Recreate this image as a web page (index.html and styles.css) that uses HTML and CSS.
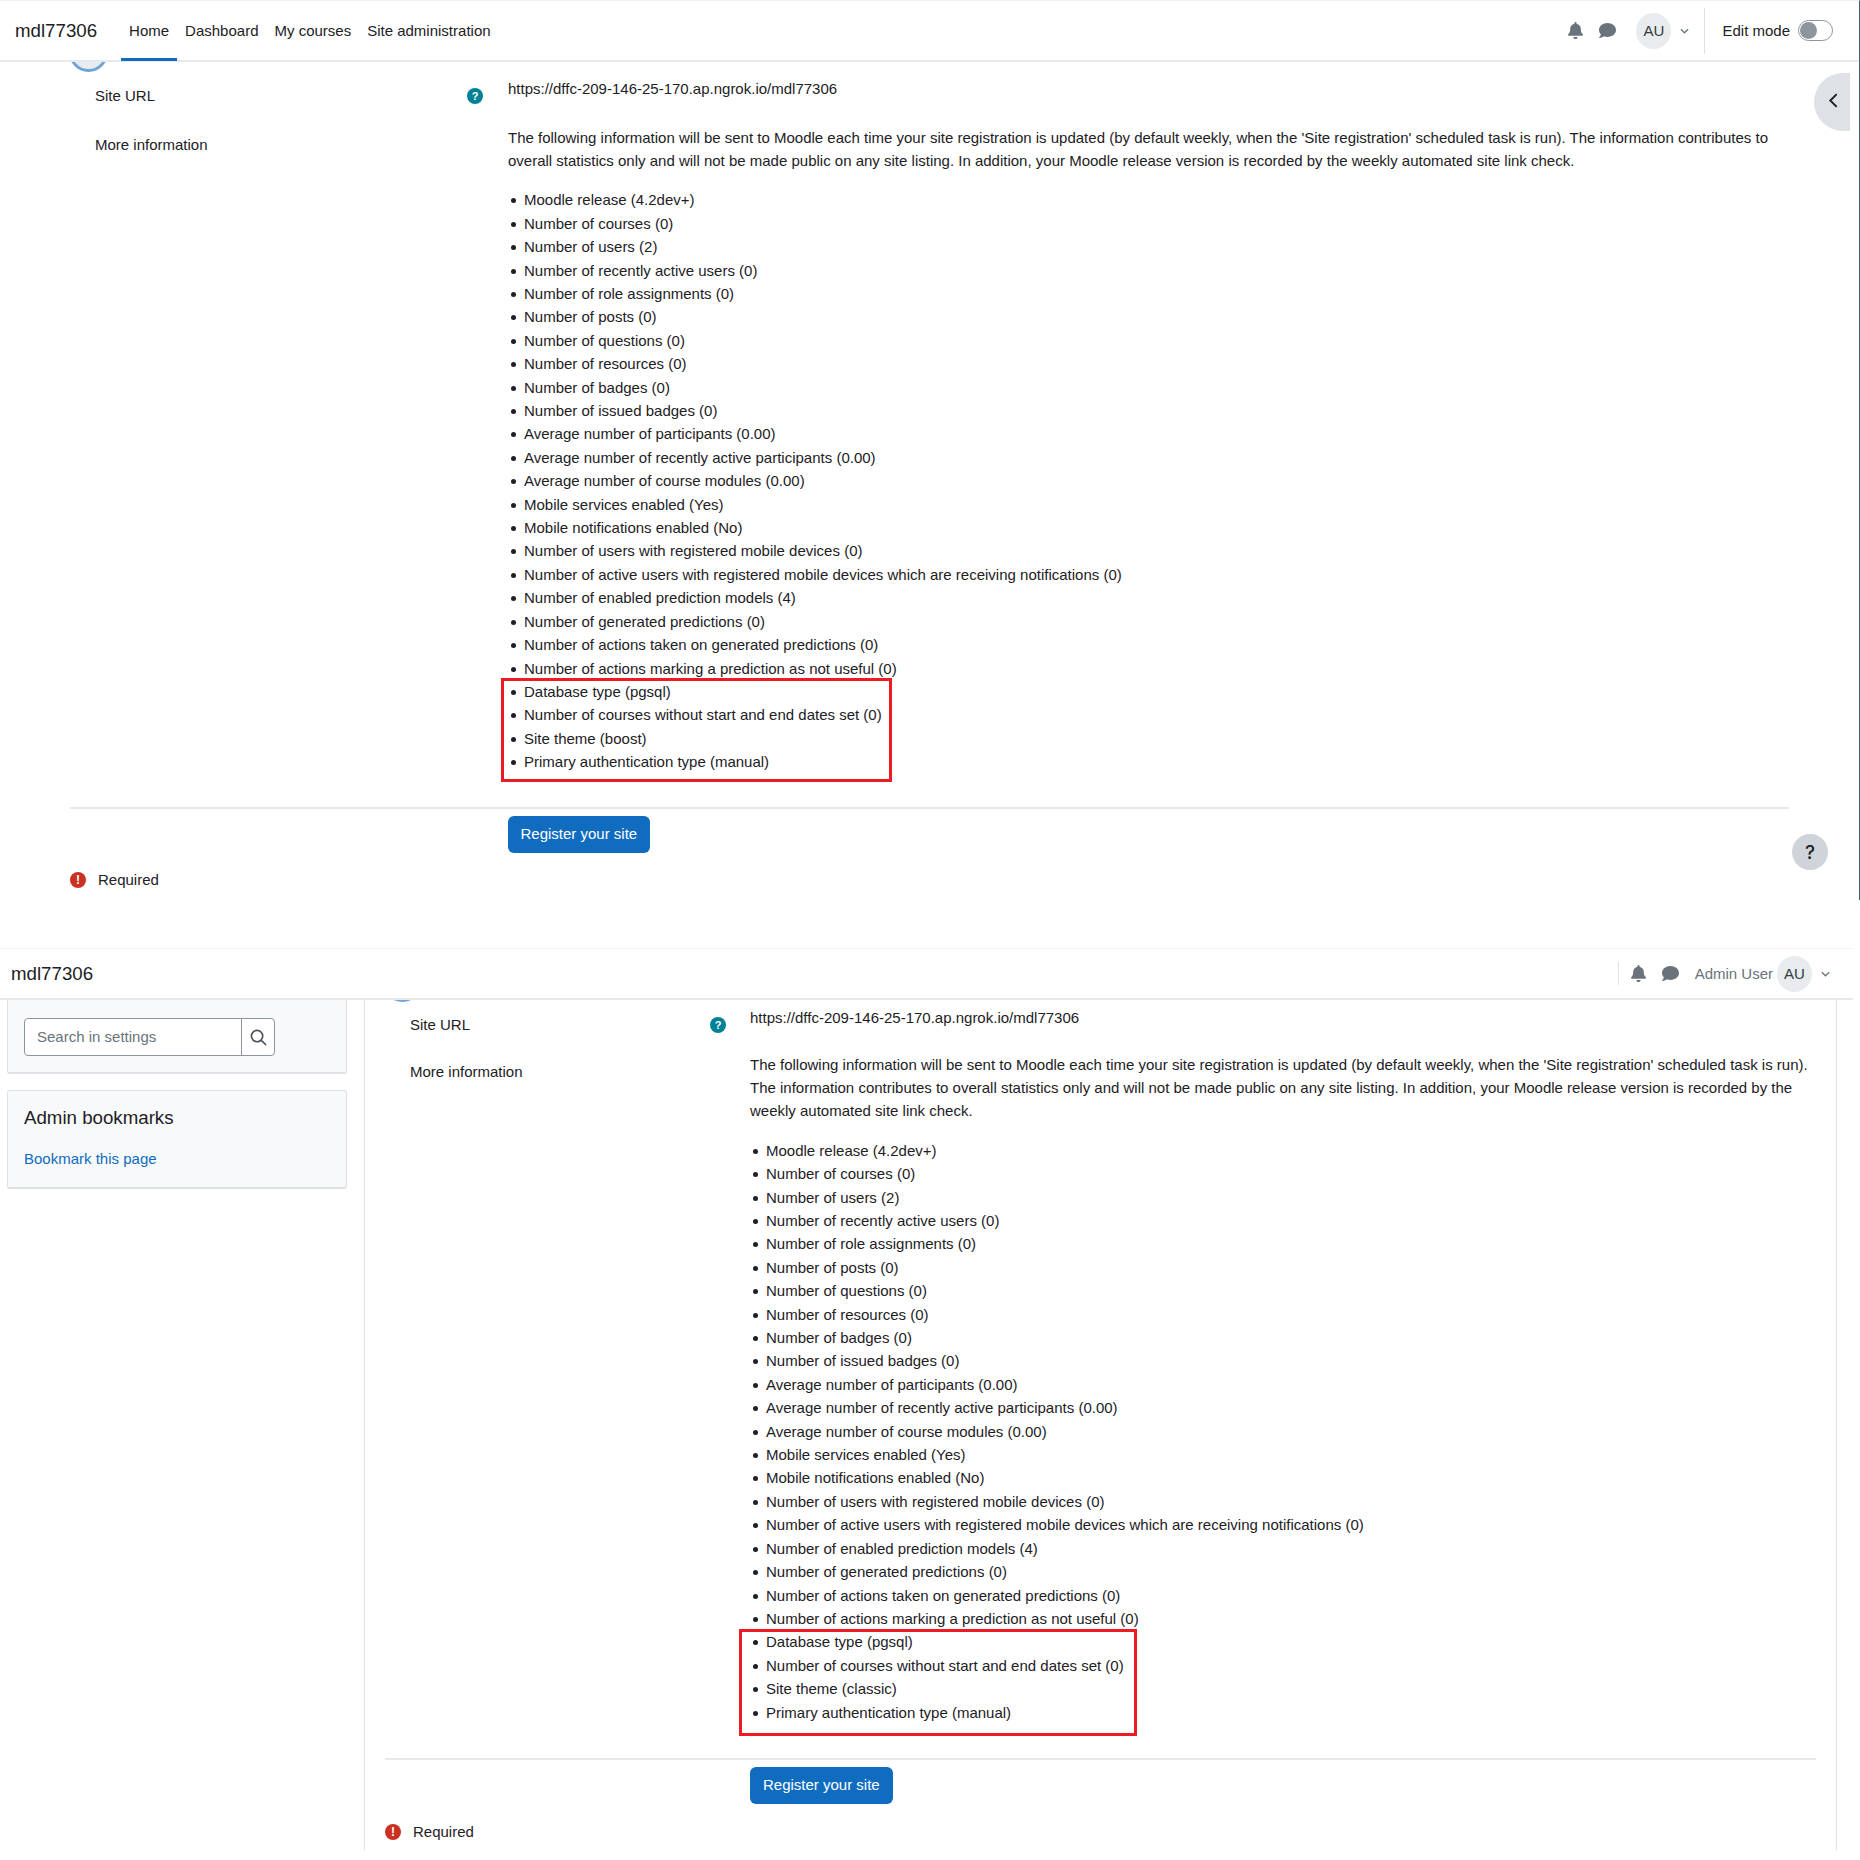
FILE: index.html
```html
<!DOCTYPE html>
<html lang="en">
<head>
  <meta charset="UTF-8" />
  <title>Site registration - mdl77306</title>
  <link rel="stylesheet" href="styles.css">
</head>
<body>

  <!-- boost theme -->
  <section class="shot shot-boost">
    <header class="navbar">
      <span class="brand">mdl77306</span>
      <nav class="primary-nav">
        <a class="active" href="#">Home</a>
        <a href="#">Dashboard</a>
        <a href="#">My courses</a>
        <a href="#">Site administration</a>
      </nav>
      <div class="usermenu">
        <svg class="icon-bell" viewBox="0 0 448 512"><path d="M224 512c35 0 64-29 64-64H160c0 35 29 64 64 64zm215-150c-19-21-55-52-55-154 0-78-54-140-128-155V32a32 32 0 0 0-64 0v21C118 68 64 130 64 208c0 102-36 133-55 154-6 6-9 14-9 22 0 16 13 32 32 32h384c19 0 32-16 32-32 0-8-3-16-9-22z"/></svg>
        <svg class="icon-chat" viewBox="0 0 512 512"><path d="M256 32C115 32 0 125 0 240c0 50 22 95 58 131-13 50-53 93-54 94-3 3-4 7-2 11s5 4 8 4c66 0 116-32 141-51 32 12 67 19 105 19 141 0 256-93 256-208S397 32 256 32z"/></svg>
        <span class="avatar">AU</span>
        <svg class="chevron" viewBox="0 0 10 6"><path d="M1 1l4 4 4-4"/></svg>
        <span class="divider"></span>
        <span class="editmode">Edit mode</span>
        <span class="toggle"><i></i></span>
      </div>
    </header>

    <span class="step-circle"></span>

    <div class="region">
      <form class="regform">
        <div class="fitem fitem-url">
          <div class="flabel">Site URL
            <span class="help">?</span>
          </div>
          <div class="fvalue">https://dffc-209-146-25-170.ap.ngrok.io/mdl77306</div>
        </div>
        <div class="fitem">
          <div class="flabel">More information</div>
          <div class="fvalue">
            <p>The following information will be sent to Moodle each time your site registration is updated (by default weekly, when the 'Site registration' scheduled task is run). The information contributes to overall statistics only and will not be made public on any site listing. In addition, your Moodle release version is recorded by the weekly automated site link check.</p>
            <ul>
              <li>Moodle release (4.2dev+)</li>
              <li>Number of courses (0)</li>
              <li>Number of users (2)</li>
              <li>Number of recently active users (0)</li>
              <li>Number of role assignments (0)</li>
              <li>Number of posts (0)</li>
              <li>Number of questions (0)</li>
              <li>Number of resources (0)</li>
              <li>Number of badges (0)</li>
              <li>Number of issued badges (0)</li>
              <li>Average number of participants (0.00)</li>
              <li>Average number of recently active participants (0.00)</li>
              <li>Average number of course modules (0.00)</li>
              <li>Mobile services enabled (Yes)</li>
              <li>Mobile notifications enabled (No)</li>
              <li>Number of users with registered mobile devices (0)</li>
              <li>Number of active users with registered mobile devices which are receiving notifications (0)</li>
              <li>Number of enabled prediction models (4)</li>
              <li>Number of generated predictions (0)</li>
              <li>Number of actions taken on generated predictions (0)</li>
              <li>Number of actions marking a prediction as not useful (0)</li>
            </ul>
            <ul class="marked">
              <li>Database type (pgsql)</li>
              <li>Number of courses without start and end dates set (0)</li>
              <li>Site theme (boost)</li>
              <li>Primary authentication type (manual)</li>
            </ul>
          </div>
        </div>
        <div class="factions">
          <button class="btn-primary" type="button">Register your site</button>
        </div>
        <div class="required">
          <span class="req-icon">!</span>
          Required
        </div>
      </form>
    </div>

    <button class="drawer-toggle" type="button">
      <svg viewBox="0 0 10 16"><path d="M8 2L2 8l6 6"/></svg>
    </button>
    <button class="help-fab" type="button">?</button>
  </section>

  <!-- classic theme -->
  <section class="shot shot-classic">
    <header class="navbar">
      <span class="brand">mdl77306</span>
      <div class="usermenu">
        <span class="divider"></span>
        <svg class="icon-bell" viewBox="0 0 448 512"><path d="M224 512c35 0 64-29 64-64H160c0 35 29 64 64 64zm215-150c-19-21-55-52-55-154 0-78-54-140-128-155V32a32 32 0 0 0-64 0v21C118 68 64 130 64 208c0 102-36 133-55 154-6 6-9 14-9 22 0 16 13 32 32 32h384c19 0 32-16 32-32 0-8-3-16-9-22z"/></svg>
        <svg class="icon-chat" viewBox="0 0 512 512"><path d="M256 32C115 32 0 125 0 240c0 50 22 95 58 131-13 50-53 93-54 94-3 3-4 7-2 11s5 4 8 4c66 0 116-32 141-51 32 12 67 19 105 19 141 0 256-93 256-208S397 32 256 32z"/></svg>
        <span class="username">Admin User</span>
        <span class="avatar">AU</span>
        <svg class="chevron" viewBox="0 0 10 6"><path d="M1 1l4 4 4-4"/></svg>
      </div>
    </header>

    <span class="step-circle"></span>

    <div class="columns">
      <aside class="sidebar">
        <div class="block block-search">
          <div class="searchbox">
            <span class="search-input">Search in settings</span>
            <span class="search-btn">
              <svg viewBox="0 0 18 18"><circle cx="7.5" cy="7.5" r="6"/><path d="M12 12l5 5"/></svg>
            </span>
          </div>
        </div>
        <div class="block block-bookmarks">
          <h5>Admin bookmarks</h5>
          <a href="#">Bookmark this page</a>
        </div>
      </aside>

      <div class="region">
        <form class="regform">
          <div class="fitem fitem-url">
            <div class="flabel">Site URL
              <span class="help">?</span>
            </div>
            <div class="fvalue">https://dffc-209-146-25-170.ap.ngrok.io/mdl77306</div>
          </div>
          <div class="fitem">
            <div class="flabel">More information</div>
            <div class="fvalue">
              <p>The following information will be sent to Moodle each time your site registration is updated (by default weekly, when the 'Site registration' scheduled task is run). The information contributes to overall statistics only and will not be made public on any site listing. In addition, your Moodle release version is recorded by the weekly automated site link check.</p>
              <ul>
                <li>Moodle release (4.2dev+)</li>
                <li>Number of courses (0)</li>
                <li>Number of users (2)</li>
                <li>Number of recently active users (0)</li>
                <li>Number of role assignments (0)</li>
                <li>Number of posts (0)</li>
                <li>Number of questions (0)</li>
                <li>Number of resources (0)</li>
                <li>Number of badges (0)</li>
                <li>Number of issued badges (0)</li>
                <li>Average number of participants (0.00)</li>
                <li>Average number of recently active participants (0.00)</li>
                <li>Average number of course modules (0.00)</li>
                <li>Mobile services enabled (Yes)</li>
                <li>Mobile notifications enabled (No)</li>
                <li>Number of users with registered mobile devices (0)</li>
                <li>Number of active users with registered mobile devices which are receiving notifications (0)</li>
                <li>Number of enabled prediction models (4)</li>
                <li>Number of generated predictions (0)</li>
                <li>Number of actions taken on generated predictions (0)</li>
                <li>Number of actions marking a prediction as not useful (0)</li>
              </ul>
              <ul class="marked">
                <li>Database type (pgsql)</li>
                <li>Number of courses without start and end dates set (0)</li>
                <li>Site theme (classic)</li>
                <li>Primary authentication type (manual)</li>
              </ul>
            </div>
          </div>
          <div class="factions">
            <button class="btn-primary" type="button">Register your site</button>
          </div>
          <div class="required">
            <span class="req-icon">!</span>
            Required
          </div>
        </form>
      </div>
    </div>
  </section>

</body>
</html>
```

FILE: styles.css
```css
:root {
  --text-color: #1d2125;
  --line-color: #dee2e6;
  --brand-blue: #0f6cbf;
  --red-box: #ed1c24;
  --icon-grey: #6a737b;
}

* {
  box-sizing: border-box;
}

body {
  margin: 0;
  background-color: #fff;
  color: var(--text-color);
  font-family: "Liberation Sans", Arial, sans-serif;
  font-size: 15px;
  line-height: 23.4px;
}

.shot {
  position: relative;
  overflow: hidden;
}

.shot-boost {
  height: 900px;
  border-top: 1px solid #f0f0f0;
  border-right: 1px solid #3f5f7f;
}

.shot-classic {
  height: 902px;
  margin-top: 48px;
  margin-right: 7px;
  border-top: 1px solid #f2f2f2;
}

/* navbar */
.navbar {
  position: relative;
  z-index: 2;
  display: flex;
  align-items: center;
  background-color: #fff;
  border-bottom: 2px solid #e6e8ea;
}

.shot-boost .navbar {
  height: 61px;
  padding: 0 26px 0 15px;
}

.shot-classic .navbar {
  height: 51px;
  padding: 0 23px 0 11px;
}

.brand {
  font-size: 18.7px;
}

.primary-nav {
  display: flex;
  align-self: stretch;
  margin-left: 24px;
}

.primary-nav a {
  display: flex;
  align-items: center;
  padding: 3px 8px 0;
  margin-bottom: -1px;
  color: var(--text-color);
  text-decoration: none;
  border-bottom: 3px solid transparent;
}

.primary-nav a.active {
  border-bottom-color: var(--brand-blue);
}

.usermenu {
  display: flex;
  align-items: center;
  margin-left: auto;
}

.icon-bell {
  width: 15px;
  height: 17px;
  fill: var(--icon-grey);
}

.icon-chat {
  width: 17px;
  height: 17px;
  margin-left: 16px;
  fill: var(--icon-grey);
}

.avatar {
  display: flex;
  align-items: center;
  justify-content: center;
  width: 35px;
  height: 36px;
  border-radius: 50%;
  background-color: #e9ecef;
  color: #343a40;
}

.shot-boost .avatar {
  margin-left: 20px;
}

.shot-classic .avatar {
  margin-left: 4px;
}

.chevron {
  width: 9px;
  height: 6px;
  margin-left: 9px;
  fill: none;
  stroke: var(--icon-grey);
  stroke-width: 1.4;
}

.divider {
  width: 1px;
  background-color: var(--line-color);
}

.shot-boost .divider {
  height: 46px;
  margin: 0 17px 0 15px;
}

.shot-classic .divider {
  height: 23px;
  margin-right: 12px;
}

.username {
  margin-left: 16px;
  color: var(--icon-grey);
}

.toggle {
  display: flex;
  align-items: center;
  width: 35px;
  height: 21px;
  margin-left: 8px;
  padding-left: 1px;
  border: 1px solid #8f959e;
  border-radius: 11px;
}

.toggle i {
  display: block;
  width: 17px;
  height: 17px;
  border-radius: 50%;
  background-color: #8f959e;
}

/* the stepper circle, almost scrolled away under the navbar */
.step-circle {
  position: absolute;
  z-index: 1;
  width: 39px;
  height: 39px;
  border: 3px solid #6ea5d8;
  border-radius: 50%;
  background-color: #e9ecef;
}

.shot-boost .step-circle {
  top: 32px;
  left: 69px;
}

.shot-classic .step-circle {
  top: 14px;
  left: 383px;
}

/* form */
.shot-boost .region {
  padding: 15px 70px 0;
}

.shot-classic .region {
  flex: 1;
  margin-right: 16px;
  padding: 6px 20px 0;
  border-left: 1px solid var(--line-color);
  border-right: 1px solid var(--line-color);
}

.fitem {
  display: grid;
}

.shot-boost .fitem {
  grid-template-columns: 438px 1fr;
}

.shot-classic .fitem {
  grid-template-columns: 365px 1fr;
}

.flabel {
  position: relative;
  padding-top: 7px;
  padding-left: 25px;
}

.shot-boost .fitem-url {
  margin-bottom: 18.6px;
}

.shot-classic .fitem-url {
  margin-bottom: 17px;
}

.help {
  position: absolute;
  top: 11px;
  width: 16px;
  height: 16px;
  border-radius: 50%;
  background-color: #008196;
  color: #fff;
  font-size: 11px;
  font-weight: bold;
  line-height: 16px;
  text-align: center;
}

.shot-boost .help {
  left: 397px;
}

.shot-classic .help {
  left: 325px;
}

.fvalue p {
  margin: 0 0 16.4px;
  line-height: 23px;
}

.fvalue ul {
  margin: 0;
  padding-left: 16px;
  list-style: none;
}

.fvalue li {
  position: relative;
}

.fvalue li::before {
  content: "";
  position: absolute;
  left: -13px;
  top: 10px;
  width: 5px;
  height: 5px;
  border-radius: 50%;
  background-color: var(--text-color);
}

.fvalue ul.marked {
  position: relative;
}

.shot-boost .fvalue ul.marked {
  margin-bottom: 33.4px;
}

.shot-classic .fvalue ul.marked {
  margin-bottom: 34px;
}

.marked::after {
  content: "";
  position: absolute;
  top: -2px;
  border: 3px solid var(--red-box);
  pointer-events: none;
}

.shot-boost .marked::after {
  bottom: -8px;
  left: -7px;
  width: 385px;
}

.shot-classic .marked::after {
  top: -1px;
  bottom: -12px;
  left: -11px;
  width: 392px;
}

.factions {
  border-top: 2px solid #e6e8ea;
  padding-top: 7px;
}

.shot-boost .factions {
  padding-left: 438px;
}

.shot-classic .factions {
  padding-left: 365px;
}

.btn-primary {
  height: 37px;
  padding: 0 12.5px 1px;
  border: 0;
  border-radius: 6px;
  background-color: var(--brand-blue);
  color: #fff;
  font-family: inherit;
  font-size: 15px;
}

.shot-classic .btn-primary {
  padding: 0 13px 1px;
}

.required {
  display: flex;
  align-items: center;
  gap: 12px;
  margin-top: 15px;
}

.shot-classic .required {
  margin-top: 16px;
}

.req-icon {
  width: 16px;
  height: 16px;
  border-radius: 50%;
  background-color: #ca3120;
  color: #fff;
  font-size: 12px;
  font-weight: bold;
  line-height: 16px;
  text-align: center;
}

/* floating buttons on the boost page */
.drawer-toggle {
  position: absolute;
  top: 72px;
  right: 9px;
  width: 36px;
  height: 58px;
  padding: 0 0 0 2px;
  border: 0;
  border-radius: 29px 0 0 29px;
  background-color: #dee2e6;
}

.drawer-toggle svg {
  width: 11px;
  height: 17px;
  fill: none;
  stroke: #1d2125;
  stroke-width: 1.8;
}

.help-fab {
  position: absolute;
  top: 833px;
  left: 1792px;
  width: 36px;
  height: 36px;
  padding: 0;
  border: 0;
  border-radius: 50%;
  background-color: #ced4da;
  color: #1d2125;
  font-family: Inter, "Liberation Sans", sans-serif;
  font-size: 19px;
  font-weight: 500;
}

/* classic sidebar */
.columns {
  display: flex;
  height: 850px;
}

.sidebar {
  width: 364px;
  padding: 0 17px 0 7px;
  flex-shrink: 0;
}

.block {
  border: 1px solid var(--line-color);
  border-bottom-width: 2px;
  border-radius: 3px;
  background-color: #f8f9fa;
}

.block-search {
  height: 74px;
  margin-bottom: 16px;
  padding: 18px 16px 0;
  border-top: 0;
  border-radius: 0 0 3px 3px;
}

.searchbox {
  display: flex;
  width: 251px;
  height: 38px;
  background-color: #fff;
  border: 1px solid #8f959e;
  border-radius: 4px;
}

.search-input {
  flex: 1;
  padding: 6px 12px;
  color: #6a737b;
}

.search-btn {
  display: flex;
  align-items: center;
  justify-content: center;
  width: 33px;
  border-left: 1px solid #8f959e;
}

.search-btn svg {
  width: 17px;
  height: 17px;
  fill: none;
  stroke: #495057;
  stroke-width: 1.7;
}

.block-bookmarks {
  height: 99px;
  padding: 16px;
}

.block-bookmarks h5 {
  margin: 0 0 18px;
  font-size: 18.7px;
  font-weight: normal;
  line-height: 22px;
}

.block-bookmarks a {
  color: var(--brand-blue);
  text-decoration: none;
}
```
